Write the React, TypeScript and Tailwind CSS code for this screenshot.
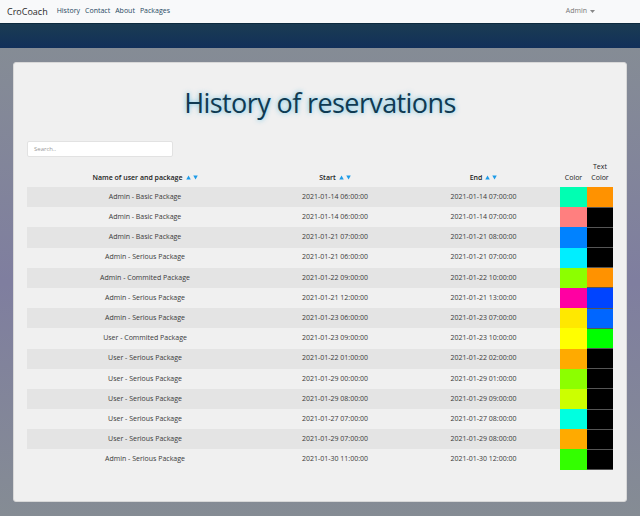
import React from "react";

const rows: [string, string, string, string, string][] = [
  ["Admin - Basic Package", "2021-01-14 06:00:00", "2021-01-14 07:00:00", "#00ffb2", "#ff9200"],
  ["Admin - Basic Package", "2021-01-14 06:00:00", "2021-01-14 07:00:00", "#ff7f7f", "#000000"],
  ["Admin - Basic Package", "2021-01-21 07:00:00", "2021-01-21 08:00:00", "#0082ff", "#000000"],
  ["Admin - Serious Package", "2021-01-21 06:00:00", "2021-01-21 07:00:00", "#00eeff", "#000000"],
  ["Admin - Commited Package", "2021-01-22 09:00:00", "2021-01-22 10:00:00", "#8cff00", "#ff9200"],
  ["Admin - Serious Package", "2021-01-21 12:00:00", "2021-01-21 13:00:00", "#ff00a2", "#0044ff"],
  ["Admin - Serious Package", "2021-01-23 06:00:00", "2021-01-23 07:00:00", "#ffe800", "#0066ff"],
  ["User - Commited Package", "2021-01-23 09:00:00", "2021-01-23 10:00:00", "#ffff00", "#00ff00"],
  ["User - Serious Package", "2021-01-22 01:00:00", "2021-01-22 02:00:00", "#ffaa00", "#000000"],
  ["User - Serious Package", "2021-01-29 00:00:00", "2021-01-29 01:00:00", "#8cff00", "#000000"],
  ["User - Serious Package", "2021-01-29 08:00:00", "2021-01-29 09:00:00", "#ccff00", "#000000"],
  ["User - Serious Package", "2021-01-27 07:00:00", "2021-01-27 08:00:00", "#00ffe0", "#000000"],
  ["User - Serious Package", "2021-01-29 07:00:00", "2021-01-29 08:00:00", "#ffaa00", "#000000"],
  ["Admin - Serious Package", "2021-01-30 11:00:00", "2021-01-30 12:00:00", "#33ff00", "#000000"],
];

function Sort() {
  return (
    <span className="ml-[3px] inline-flex items-center gap-[2px] align-middle text-[#1d9be8]">
      <svg width="5" height="5" viewBox="0 0 10 10"><path d="M5 1 L9.5 9 L0.5 9 Z" fill="currentColor" /></svg>
      <svg width="5" height="5" viewBox="0 0 10 10"><path d="M0.5 1 L9.5 1 L5 9 Z" fill="currentColor" /></svg>
    </span>
  );
}

export default function App() {
  return (
    <div
      className="min-h-[516px] w-[640px] overflow-hidden"
      style={{ fontFamily: '"Open Sans", "Liberation Sans", sans-serif' }}
    >
      <nav className="flex h-[23px] items-center bg-[#f8f9fa] px-[7px]">
        <span className="text-[9px] text-[#2a2a2a]">CroCoach</span>
        <div className="ml-[9px] flex gap-[5px] text-[7px] font-medium text-[#1f4862]">
          <span>History</span>
          <span>Contact</span>
          <span>About</span>
          <span>Packages</span>
        </div>
        <div className="ml-auto mr-[38px] flex items-center text-[7px] text-[#777]">
          Admin
          <svg className="ml-[3px]" width="5" height="3" viewBox="0 0 10 6"><path d="M0 0 L10 0 L5 6 Z" fill="#888" /></svg>
        </div>
      </nav>
      <div className="h-[25px] border-t border-[#0d2a3e] bg-gradient-to-b from-[#1b3b52] to-[#12305a]" />
      <div className="bg-gradient-to-b from-[#858c95] via-[#7f7e9f] to-[#858c94] px-[13px] pb-[14px] pt-[14px]">
        <div className="h-[440px] rounded-[3px] border border-[#d8d8d8] bg-[#f0f0f0] px-[13px]">
          <h1
            className="mt-[24px] text-center text-[27px] font-medium leading-[32px] tracking-[-0.6px] text-[#0f3a52]"
            style={{ textShadow: "0 0 5px rgba(40,170,220,0.7)" }}
          >
            History of reservations
          </h1>
          <div className="mt-[22px] flex h-[16px] w-[146px] items-center rounded-[2px] border border-[#e2e2e2] bg-white pl-[6px] text-[6px] text-[#999]">
            Search..
          </div>
          <table className="mt-[4px] w-[586px] table-fixed border-collapse text-[7px] text-[#3a3a3a]">
            <colgroup>
              <col className="w-[236px]" />
              <col className="w-[144px]" />
              <col className="w-[153px]" />
              <col className="w-[27px]" />
              <col className="w-[26px]" />
            </colgroup>
            <thead>
              <tr className="h-[26px]">
                <th className="pb-[4px] align-bottom text-[7px] font-semibold text-[#222]">Name of user and package<Sort /></th>
                <th className="pb-[4px] align-bottom text-[7px] font-semibold text-[#222]">Start<Sort /></th>
                <th className="pb-[4px] align-bottom text-[7px] font-semibold text-[#222]">End<Sort /></th>
                <th className="pb-[4px] align-bottom text-[7px] font-normal leading-[11px] text-[#222]">Color</th>
                <th className="pb-[4px] align-bottom text-[7px] font-normal leading-[11px] text-[#222]">Text<br />Color</th>
              </tr>
            </thead>
            <tbody>
              {rows.map((r, i) => (
                <tr key={i} className={`h-[20.2px] ${i % 2 === 0 ? "bg-[#e4e4e4]" : "bg-[#f0f0f0]"}`}>
                  <td className="p-0 text-center">{r[0]}</td>
                  <td className="p-0 text-center">{r[1]}</td>
                  <td className="p-0 text-center">{r[2]}</td>
                  <td className="p-0" style={{ backgroundColor: r[3] }} />
                  <td className="border-b border-[#555] p-0" style={{ backgroundColor: r[4] }} />
                </tr>
              ))}
            </tbody>
          </table>
        </div>
      </div>
    </div>
  );
}
